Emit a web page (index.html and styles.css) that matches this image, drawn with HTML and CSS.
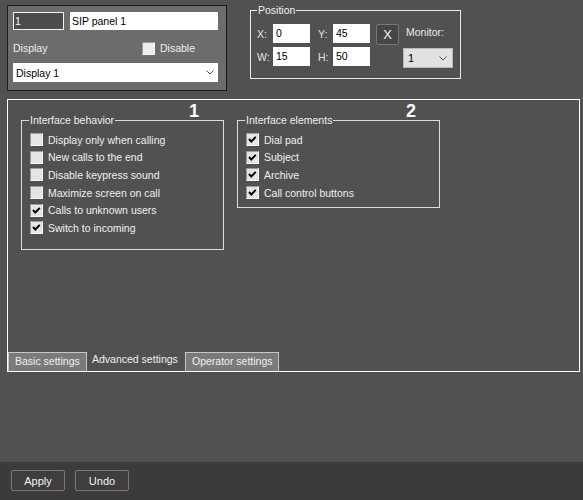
FILE: index.html
```html
<!DOCTYPE html>
<html>
<head>
<meta charset="utf-8">
<link rel="stylesheet" href="styles.css">
</head>
<body>
<div class="app">
  <div class="top">
    <div class="idbox">
      <div class="idrow">
        <div class="inp inp-dark">1</div>
        <div class="inp inp-name">SIP panel 1</div>
      </div>
      <div class="disprow">
        <span class="lbl">Display</span>
        <span class="chk"><span class="box box-light"></span><span>Disable</span></span>
      </div>
      <div class="select">
        <span>Display 1</span>
        <svg class="chev" width="8" height="5" viewBox="0 0 8 5"><path d="M0.5 0.5 L4 4 L7.5 0.5" fill="none" stroke="#555" stroke-width="1"/></svg>
      </div>
    </div>
    <fieldset class="pos">
      <legend>Position</legend>
      <div class="prow">
        <span class="plbl">X:</span>
        <span class="pinp">0</span>
        <span class="plbl plbl-2">Y:</span>
        <span class="pinp">45</span>
        <span class="xbtn">X</span>
        <span class="monlbl">Monitor:</span>
      </div>
      <div class="prow prow-2">
        <span class="plbl">W:</span>
        <span class="pinp">15</span>
        <span class="plbl plbl-2">H:</span>
        <span class="pinp">50</span>
        <span class="monsel">
          <span>1</span>
          <svg class="chev" width="8" height="5" viewBox="0 0 8 5"><path d="M0.5 0.5 L4 4 L7.5 0.5" fill="none" stroke="#555" stroke-width="1"/></svg>
        </span>
      </div>
    </fieldset>
  </div>

  <div class="panel">
    <div class="cols">
      <div class="col">
        <div class="num">1</div>
        <fieldset class="group group-1">
          <legend>Interface behavior</legend>
          <div class="cb"><span class="box"></span><span>Display only when calling</span></div>
          <div class="cb"><span class="box"></span><span>New calls to the end</span></div>
          <div class="cb"><span class="box"></span><span>Disable keypress sound</span></div>
          <div class="cb"><span class="box"></span><span>Maximize screen on call</span></div>
          <div class="cb"><span class="box"><svg viewBox="0 0 11 11" width="11" height="11"><polyline points="2,5 4.3,7.5 8.8,2.8" fill="none" stroke="#000" stroke-width="1.9"/></svg></span><span>Calls to unknown users</span></div>
          <div class="cb"><span class="box"><svg viewBox="0 0 11 11" width="11" height="11"><polyline points="2,5 4.3,7.5 8.8,2.8" fill="none" stroke="#000" stroke-width="1.9"/></svg></span><span>Switch to incoming</span></div>
        </fieldset>
      </div>
      <div class="col">
        <div class="num">2</div>
        <fieldset class="group group-2">
          <legend>Interface elements</legend>
          <div class="cb"><span class="box"><svg viewBox="0 0 11 11" width="11" height="11"><polyline points="2,5 4.3,7.5 8.8,2.8" fill="none" stroke="#000" stroke-width="1.9"/></svg></span><span>Dial pad</span></div>
          <div class="cb"><span class="box"><svg viewBox="0 0 11 11" width="11" height="11"><polyline points="2,5 4.3,7.5 8.8,2.8" fill="none" stroke="#000" stroke-width="1.9"/></svg></span><span>Subject</span></div>
          <div class="cb"><span class="box"><svg viewBox="0 0 11 11" width="11" height="11"><polyline points="2,5 4.3,7.5 8.8,2.8" fill="none" stroke="#000" stroke-width="1.9"/></svg></span><span>Archive</span></div>
          <div class="cb"><span class="box"><svg viewBox="0 0 11 11" width="11" height="11"><polyline points="2,5 4.3,7.5 8.8,2.8" fill="none" stroke="#000" stroke-width="1.9"/></svg></span><span>Call control buttons</span></div>
        </fieldset>
      </div>
    </div>
    <div class="tabs">
      <div class="tab tab-basic">Basic settings</div>
      <div class="tab tab-active">Advanced settings</div>
      <div class="tab tab-oper">Operator settings</div>
    </div>
  </div>

  <div class="footer">
    <div class="btn">Apply</div>
    <div class="btn">Undo</div>
  </div>
</div>
</body>
</html>
```

FILE: styles.css
```css
html, body {
  margin: 0;
  padding: 0;
}
body {
  background: #515151;
  font-family: "Liberation Sans", Arial, sans-serif;
  font-size: 10.5px;
  color: #f0f0f0;
}
.app {
  height: 500px;
  display: flex;
  flex-direction: column;
  overflow: hidden;
}

/* top row */
.top {
  display: flex;
  align-items: flex-start;
  padding-top: 5px;
}
.idbox {
  margin-left: 7px;
  width: 220px;
  height: 86px;
  box-sizing: border-box;
  border: 1px solid #1c1c1c;
  background: #6c6c6c;
  padding: 6px 0 0 5px;
}
.idrow {
  display: flex;
  gap: 6px;
  height: 18px;
}
.inp {
  height: 18px;
  box-sizing: border-box;
  line-height: 18px;
  padding-left: 2px;
  font-size: 10.5px;
}
.inp-dark {
  width: 51px;
  border: 1px solid #f2f2f2;
  background: #4c4c4c;
  color: #fff;
  line-height: 16px;
  padding-left: 1px;
}
.inp-name {
  width: 148px;
  background: #fff;
  color: #000;
}
.disprow {
  margin-top: 11px;
  height: 14px;
  display: grid;
  grid-template-columns: 129px auto;
  align-items: center;
  line-height: 14px;
  color: #ececec;
}
.chk {
  display: flex;
  align-items: center;
  gap: 5px;
}
.select {
  margin-top: 8px;
  width: 205px;
  height: 19px;
  box-sizing: border-box;
  background: #fff;
  color: #000;
  display: flex;
  align-items: center;
  justify-content: space-between;
  padding: 0 4px 0 3px;
}
.chev {
  display: block;
}

/* position */
.pos {
  margin: -1px 0 0 23px;
  width: 211px;
  height: 75px;
  box-sizing: border-box;
  border: 1px solid #e8e8e8;
  padding: 8px 0 0 6px;
  min-width: 0;
}
.pos legend {
  padding: 0 1px;
  line-height: 12px;
  color: #f0f0f0;
}
.prow {
  display: flex;
  align-items: center;
  height: 19px;
}
.prow-2 {
  margin-top: 4px;
}
.plbl {
  width: 16px;
  color: #e2e2e2;
}
.plbl-2 {
  width: 15px;
  margin-left: 8px;
}
.pinp {
  width: 37px;
  height: 19px;
  box-sizing: border-box;
  background: #fff;
  color: #000;
  padding-left: 3px;
  line-height: 19px;
}
.xbtn {
  align-self: flex-start;
  margin-left: 6px;
  width: 23px;
  height: 21px;
  box-sizing: border-box;
  border: 1px solid #777;
  border-radius: 2px;
  background: #454545;
  color: #f4f4f4;
  font-size: 13px;
  display: flex;
  align-items: center;
  justify-content: center;
}
.monlbl {
  margin-left: 7px;
  margin-top: -3px;
  color: #eaeaea;
}
.monsel {
  align-self: flex-start;
  margin: 1px 0 0 33px;
  width: 50px;
  height: 20px;
  box-sizing: border-box;
  border: 1px solid #b8b8b8;
  background: #e1e1e1;
  color: #000;
  display: flex;
  align-items: center;
  justify-content: space-between;
  padding: 0 5px 0 4px;
  font-size: 11px;
}

/* main panel */
.panel {
  margin: 8px 0 0 7px;
  width: 573px;
  height: 273px;
  box-sizing: border-box;
  border: 1px solid #fff;
  display: flex;
  flex-direction: column;
}
.cols {
  display: flex;
  gap: 13px;
  padding: 3px 0 0 13px;
}
.col {
  width: 203px;
}
.num {
  text-align: right;
  padding-right: 25px;
  font-size: 18px;
  font-weight: bold;
  line-height: 17px;
  color: #fff;
  margin-bottom: -6px;
}
.col + .col .num {
  padding-right: 24px;
}
.group {
  margin: 0;
  min-width: 0;
  border: 1px solid #dcdcdc;
  padding: 4px 0 12px 8px;
}
.group-2 {
  padding-bottom: 6px;
}
.group legend {
  padding: 0 1px;
  margin-left: -1px;
  line-height: 13px;
  color: #f0f0f0;
}
.cb {
  display: flex;
  align-items: center;
  height: 17.6px;
}
.box {
  width: 13px;
  height: 13px;
  box-sizing: border-box;
  margin-right: 5px;
  background: #e4e4e4;
  border-top: 1px solid #9c9c9c;
  border-left: 1px solid #9c9c9c;
  border-bottom: 1px solid #f6f6f6;
  border-right: 1px solid #f6f6f6;
  display: flex;
  flex: none;
}
.box svg {
  display: block;
}
.box-light {
  background: #ececec;
  margin-right: 0;
}

/* tabs */
.tabs {
  margin-top: auto;
  display: flex;
  align-items: flex-end;
  height: 19px;
}
.tab {
  height: 19px;
  box-sizing: border-box;
  white-space: nowrap;
}
.tab-basic,
.tab-oper {
  border: 1px solid #c6c6c6;
  border-bottom: none;
  background: #7a7a7a;
  padding-left: 6px;
  line-height: 17px;
}
.tab-basic {
  width: 79px;
}
.tab-active {
  width: 98px;
  padding-left: 5px;
  line-height: 15px;
}
.tab-oper {
  width: 94px;
}

/* footer */
.footer {
  margin-top: auto;
  height: 38px;
  box-sizing: border-box;
  background: #3c3a3a;
  display: flex;
  gap: 10px;
  padding: 8px 0 0 11px;
}
.btn {
  width: 54px;
  height: 21px;
  box-sizing: border-box;
  border: 1px solid #7a7a7a;
  border-radius: 2px;
  background: #3f3d3d;
  color: #f4f4f4;
  font-size: 11px;
  display: flex;
  align-items: center;
  justify-content: center;
}
```
